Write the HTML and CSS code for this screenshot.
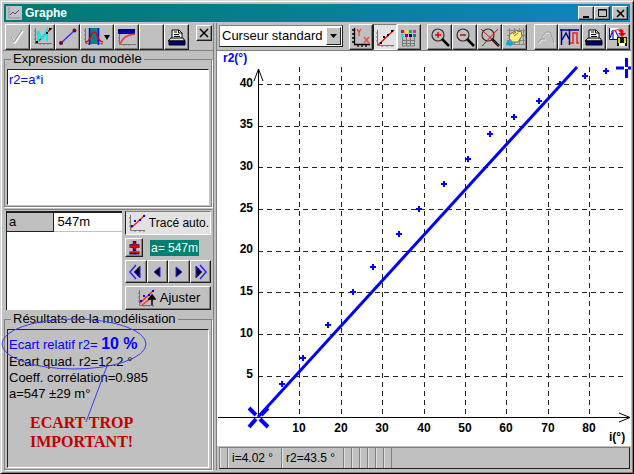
FILE: index.html
```html
<!DOCTYPE html>
<html lang="fr">
<head>
<meta charset="utf-8">
<title>Graphe</title>
<link rel="stylesheet" href="styles.css">
</head>
<body>
<div class="window">
  <header class="titlebar">
    <svg class="app-icon" width="16" height="14" viewBox="0 0 16 14"><rect width="16" height="14" fill="#c0c0c8"/><path d="M3 1v11h12" fill="none" stroke="#909098"/><path d="M4 9l3-3 2 2 4-4" fill="none" stroke="#5a4a78"/></svg>
    <h1>Graphe</h1>
    <div class="window-buttons">
      <button aria-label="Réduire"><svg width="13" height="11" viewBox="0 0 13 11"><path d="M3 9h6" stroke="#000" stroke-width="2"/></svg></button>
      <button aria-label="Agrandir"><svg width="13" height="11" viewBox="0 0 13 11"><path d="M2.500 1.500h8v7h-8zM2 2h9" fill="none" stroke="#000"/></svg></button>
      <button class="close" aria-label="Fermer"><svg width="13" height="11" viewBox="0 0 13 11"><path d="M3 2l7 7M10 2l-7 7" stroke="#000" stroke-width="1.600"/></svg></button>
    </div>
  </header>

  <main class="panes">
    <section class="model">
      <div class="toolbar">
        <button class="tool" aria-label="Valider"><svg width="22" height="22" viewBox="0 0 22 22"><path d="M5 12l3 5 8-12" fill="none" stroke="#fff" stroke-width="1.500"/><path d="M4 11l3 5 8-12" fill="none" stroke="#909090"/></svg></button>
        <button class="tool" aria-label="Modèle"><svg width="22" height="22" viewBox="0 0 22 22"><path d="M3.500 2v15.500H20M2 5h2M2 9h2M2 13h2M8 17v2M12 17v2M16 17v2" fill="none" stroke="#777"/><path d="M3 17l6-4 4-5 7-6" fill="none" stroke="#e00" stroke-width="1.500"/><path d="M6 15V5l4 8 5-9v11" fill="none" stroke="#0ee" stroke-width="2"/><path d="M4 15h2v2H4zM17 2h2v2h-2zM14 6h2v2h-2z"/></svg></button>
        <button class="tool" aria-label="Segment"><svg width="22" height="22" viewBox="0 0 22 22"><path d="M4 17L18 4" stroke="#33f" stroke-width="1.500"/><circle cx="4" cy="17" r="2" fill="#800020"/><circle cx="17.500" cy="4.500" r="2" fill="#800020"/></svg></button>
        <button class="tool drop" aria-label="Bornes"><svg width="32" height="22" viewBox="0 0 32 22"><path d="M4.500 2v15.500H22M3 5h2M3 9h2M3 13h2M8 17v2M21 17v2" fill="none" stroke="#777"/><path d="M9 2h8v16H9z" fill="#088080"/><path d="M8.500 2v17M17.500 2v17" stroke="#00f" stroke-width="1.500"/><path d="M4 16c7 0 5-10 9-10s3 10 9 10" fill="none" stroke="#e00" stroke-width="1.500"/><path d="M23 9h6l-3 5z"/></svg></button>
        <button class="tool" aria-label="Courbe"><svg width="22" height="22" viewBox="0 0 22 22"><path d="M2 3h17v5H2z" fill="#000090"/><path d="M4 6h2M8 6h2M12 6h2M16 6h2" stroke="#00f"/><path d="M3.500 8v10.500H20M2 12h2M2 15h2M8 18v2M13 18v2" fill="none" stroke="#777"/><path d="M4 18c3-7 7-9 15-10" fill="none" stroke="#e33" stroke-width="1.500"/></svg></button>
        <button class="tool" aria-label="Option"></button>
        <button class="tool" aria-label="Imprimer"><svg width="22" height="22" viewBox="0 0 22 22"><use href="#printer"/></svg></button>
        <button class="panel-close" aria-label="Fermer le volet"><svg width="13" height="13" viewBox="0 0 13 13"><path d="M2 2l8 8M10 2l-8 8" stroke="#000" stroke-width="1.500"/></svg></button>
      </div>

      <fieldset class="group">
        <legend><label for="expression">Expression du modèle</label></legend>
        <textarea id="expression" class="expression" spellcheck="false">r2=a*i</textarea>
      </fieldset>

      <div class="parameters">
        <div class="param-list">
          <table><tbody><tr><th scope="row">a</th><td>547m</td></tr></tbody></table>
        </div>
        <div class="adjust">
          <button class="auto" aria-pressed="true"><svg width="20" height="20" viewBox="0 0 20 20"><use href="#fit"/></svg>Tracé auto.</button>
          <div class="value-row">
            <button class="sign" aria-label="Changer le signe"><svg width="15" height="15" viewBox="0 0 15 15"><path d="M2.500 6h10M7.500 1v10" stroke="#000080" stroke-width="3.500"/><path d="M3 6h9M7.500 2v8" stroke="#e00000" stroke-width="2"/><path d="M2.500 13h10" stroke="#000080" stroke-width="3"/><path d="M3 12.500h9" stroke="#e00000"/></svg></button>
            <input class="value" aria-label="Valeur de a" value="a= 547m">
          </div>
          <div class="steps">
            <button aria-label="Beaucoup moins"><svg width="18" height="18" viewBox="0 0 18 18"><path d="M9 2L3 9l6 7" fill="none" stroke="#22f" stroke-width="1.500"/><path d="M13 3v12L7 9z" stroke="#22f"/></svg></button>
            <button aria-label="Moins"><svg width="18" height="18" viewBox="0 0 18 18"><path d="M12 4v10L6 9z" stroke="#22f"/></svg></button>
            <button aria-label="Plus"><svg width="18" height="18" viewBox="0 0 18 18"><path d="M6 4v10l6-5z" stroke="#22f"/></svg></button>
            <button aria-label="Beaucoup plus"><svg width="18" height="18" viewBox="0 0 18 18"><path d="M9 2l6 7-6 7" fill="none" stroke="#22f" stroke-width="1.500"/><path d="M5 3v12l6-6z" stroke="#22f"/></svg></button>
          </div>
          <button class="fit"><svg width="20" height="20" viewBox="0 0 20 20"><use href="#fit"/><path d="M6 17l12-9" stroke="#f33" stroke-width="1.500"/><path d="M16 17V8M13 11l3-4 3 4z" stroke="#000" stroke-width="1.500"/></svg>Ajuster</button>
        </div>
      </div>

      <fieldset class="group results-group">
        <legend>Résultats de la modélisation</legend>
        <div class="results">
          <p class="relative-error">Ecart relatif r2= <strong>10 %</strong></p>
          <p>Ecart quad. r2=12.2 °</p>
          <p>Coeff. corrélation=0.985</p>
          <p>a=547 ±29 m°</p>
        </div>
        <svg class="callout" width="148" height="106" viewBox="0 0 148 106"><ellipse cx="73" cy="26" rx="72" ry="25"/><path d="M106 48L85 104"/></svg>
        <p class="remark">ECART TROP IMPORTANT!</p>
      </fieldset>
    </section>

    <section class="graph">
      <div class="toolbar">
        <div class="combo">
          <select aria-label="Curseur"><option>Curseur standard</option></select>
          <span class="combo-arrow"><svg width="13" height="15" viewBox="0 0 13 15"><path d="M3 5h7l-3.500 4z"/></svg></span>
        </div>
        <div class="tools">
          <button class="tool" aria-label="Coordonnées"><svg width="22" height="22" viewBox="0 0 22 22"><path d="M4.500 2v16.500H20M2 4h2M2 8h2M2 12h2M2 16h2M8 18v3M12 18v3M16 18v3" fill="none" stroke="#000" stroke-width="1.300"/><path d="M7 3l2 3 2-3M9 6v4M14 11l5 6M19 11l-5 6" fill="none" stroke="#f04848" stroke-width="1.400"/></svg></button>
          <button class="tool pressed" aria-label="Modélisation" aria-pressed="true"><svg width="22" height="22" viewBox="0 0 22 22"><path d="M3.500 4v15.500H20M2 7h2M2 11h2M2 15h2M8 19v2M13 19v2M18 19v2" fill="none" stroke="#777"/><path d="M4 19L20 4" stroke="#f00" stroke-width="1.300"/><path d="M6 16h2v2H6zM9 10h2v2H9zM13 8h2v2h-2zM17 4h2v2h-2z"/></svg></button>
          <button class="tool" aria-label="Tableau"><svg width="22" height="22" viewBox="0 0 22 22"><path d="M4.500 11v9h12v-9M4 14.500h13M4 17.500h13M8.500 11v9M12.500 11v9" fill="none" stroke="#777"/><path d="M3 4h3v3H3z" fill="red"/><path d="M7 4h3v3H7z" fill="#ee0"/><path d="M11 4h3v3h-3z" fill="#0c0"/><path d="M15 4h3v3h-3z" fill="#f0f"/><path d="M3 8h3v3H3z" fill="#0ee"/><path d="M7 8h3v3H7z" fill="#808"/><path d="M11 8h3v3h-3z" fill="#008"/><path d="M15 8h3v3h-3z" fill="#088"/></svg></button>
        </div>
        <div class="tools zooms">
          <button class="tool" aria-label="Zoom avant"><svg width="22" height="22" viewBox="0 0 22 22"><use href="#lens"/><path d="M6 9h6M9 6v6" stroke="#d00" stroke-width="1.500"/></svg></button>
          <button class="tool" aria-label="Zoom arrière"><svg width="22" height="22" viewBox="0 0 22 22"><use href="#lens"/><path d="M6 9h6" stroke="#d00" stroke-width="1.500"/></svg></button>
          <button class="tool" aria-label="Annuler le zoom"><svg width="22" height="22" viewBox="0 0 22 22"><use href="#lens"/><path d="M2 3l18 17M19 3L3 20" stroke="#e00"/></svg></button>
          <button class="tool" aria-label="Déplacer"><svg width="22" height="22" viewBox="0 0 22 22"><path d="M5.500 2v17M10.500 2v17M15.500 2v17M19.500 2v17M3 4.500h18M3 9.500h18M3 14.500h18M3 18.500h18" stroke="#888"/><path d="M5 12l1-4 7-4 1 2 3-1 1 5-4 6H8z" fill="#fff27a" stroke="#765"/><path d="M9 8l3-2M10 10l4-3" stroke="#765"/><path d="M3 14l7 3-3 3-5-1z" fill="#0ad"/></svg></button>
        </div>
        <div class="tools">
          <button class="tool" aria-label="Lissage"><svg width="22" height="22" viewBox="0 0 22 22"><path d="M4 18l3-4h4M8 11l3-4h4l5 11" fill="none" stroke="#eee"/><path d="M3 17l3-4h4M7 11l4-5h4l4 11" fill="none" stroke="#999"/></svg></button>
          <button class="tool" aria-label="Signal"><svg width="22" height="22" viewBox="0 0 22 22"><path d="M1 4h19M2.500 3v16M10.500 3v16" stroke="#008" stroke-width="1.500"/><path d="M3 14l4-7 3 6" fill="none" stroke="#008" stroke-width="1.500"/><path d="M11 17h3V7h4v10h2" fill="none" stroke="#e22" stroke-width="1.500"/></svg></button>
          <button class="tool" aria-label="Imprimer"><svg width="22" height="22" viewBox="0 0 22 22"><use href="#printer"/></svg></button>
          <button class="tool" aria-label="Copier vers"><svg width="22" height="22" viewBox="0 0 22 22"><path d="M2 2h10v12H2z" fill="#fff"/><path d="M2.500 2v11.500H12" fill="none" stroke="#008"/><path d="M3 12l3-8v9M8 4l4 8" fill="none" stroke="#22c" stroke-width="1.300"/><path d="M4 6l8-3" stroke="#e22"/><path d="M11 4c5-2 6 1 5 3h3l-4 4-4-4h3" fill="#e00"/><path d="M10 11h10v9H10z" fill="#111"/><path d="M11 12h2v5h-2zM17 12h2v5h-2z" fill="#dd0"/><path d="M12 17h6v3h-6z" fill="#ffd"/></svg></button>
        </div>
      </div>

      <svg class="plot" viewBox="217 51 414 395" role="img" aria-label="r2 en fonction de i">
        <g class="grid">
          <path d="M299.500 67V417M341.500 67V417M382.500 67V417M424.500 67V417M465.500 67V417M506.500 67V417M548.500 67V417M589.500 67V417"/>
          <path d="M258 376.500H624M258 334.500H624M258 292.500H624M258 251.500H624M258 209.500H624M258 167.500H624M258 126.500H624M258 84.500H624"/>
        </g>
        <g class="axes">
          <path d="M218 417.500H630M619 413l11 4.500-11 4.500M258.500 417V69M254 81l4.500-12 4.500 12"/>
        </g>
        <path class="fit-line" d="M258 417L577 67"/>
        <path class="points" d="M279 384h6M282 381v6M300 358h6M303 355v6M325 325h6M328 322v6M350 292h6M353 289v6M370 267h6M373 264v6M396 234h6M399 231v6M416 209h6M419 206v6M441 184h6M444 181v6M465 159h6M468 156v6M487 134h6M490 131v6M511 117h6M514 114v6M536 101h6M539 98v6M557 84h6M560 81v6M582 76h6M585 73v6M603 71h6M606 68v6"/>
        <path class="origin" d="M249 408l7 7M260 419l8 8M268 408l-7 7M256 419l-7 8"/>
        <path class="cursor" d="M616 68h8M628 68h3M626.500 58v9M626.500 69v9"/>
        <g class="labels">
          <g text-anchor="end"><text x="253" y="87">40</text><text x="253" y="128">35</text><text x="253" y="170">30</text><text x="253" y="212">25</text><text x="253" y="253">20</text><text x="253" y="295">15</text><text x="253" y="337">10</text><text x="253" y="378">5</text></g>
          <g text-anchor="middle"><text x="299" y="432">10</text><text x="341" y="432">20</text><text x="382" y="432">30</text><text x="424" y="432">40</text><text x="465" y="432">50</text><text x="506" y="432">60</text><text x="548" y="432">70</text><text x="589" y="432">80</text></g>
          <text x="609" y="441">i(°)</text><text class="y-name" x="223" y="62">r2(°)</text>
        </g>
      </svg>

      <footer class="status">
        <span class="cell slim"></span><span class="cell x-value">i=4.02 °</span><span class="cell y-value">r2=43.5 °</span><span class="cell slim"></span><span class="cell slim"></span><span class="cell slim"></span><span class="cell slim"></span><span class="cell slim"></span><span class="cell slim"></span>
      </footer>
    </section>
  </main>
</div>

<svg class="symbols" width="0" height="0" aria-hidden="true">
  <symbol id="printer" viewBox="0 0 22 22"><path d="M6 13V4h7l3 3v6z" fill="#fff" stroke="#000"/><path d="M8 6h3M8 8.500h5M8 10.500h6M12.500 4v3H16" fill="none" stroke="#000"/><path d="M5 12l-3 3h17l-2-3z" fill="#ddd" stroke="#000"/><path d="M3 15h16v4H3z" fill="#000080" stroke="#000"/></symbol>
  <symbol id="lens" viewBox="0 0 22 22"><circle cx="9" cy="9" r="6" fill="none" stroke="#333" stroke-width="1.200"/><path d="M13 13l7 7" stroke="#000" stroke-width="2.500"/></symbol>
  <symbol id="fit" viewBox="0 0 20 20"><path d="M3.500 2v15.500H18M2 5h2M2 9h2M2 13h2M8 17v2M13 17v2M17 17v2" fill="none" stroke="#777"/><path d="M4 15L18 2" stroke="#f22" stroke-width="1.500"/><path d="M4 12h2v2H4zM7 7h2v2H7zM12 6h2v2h-2zM16 2h2v2h-2z" fill="#00f"/></symbol>
</svg>
</body>
</html>
```
FILE: styles.css
```css
:root {
  --face: #c0c0c0;
  --light: #ffffff;
  --shade: #808080;
  --dark: #202020;
  --blue: #0000ff;
}

* { box-sizing: border-box; }

body {
  margin: 0;
  height: 100vh;
  font: 13px/16px "Liberation Sans", Arial, sans-serif;
  color: #000;
  background: var(--face);
}

h1, p { margin: 0; font: inherit; }

button {
  display: flex;
  align-items: center;
  justify-content: center;
  flex: none;
  margin: 0;
  padding: 0;
  font: inherit;
  background: var(--face);
  border: 1px solid;
  border-color: var(--light) var(--dark) var(--dark) var(--light);
  box-shadow: inset -1px -1px var(--shade);
}

svg { flex: none; display: block; }

.symbols { position: absolute; }

/* Window frame */
.window {
  display: flex;
  flex-direction: column;
  min-height: 100vh;
  padding: 1px 2px 3px;
  border: 1px solid;
  border-color: #d8d8d8 #000 #000 #d8d8d8;
  box-shadow: inset 1px 1px var(--light), inset -1px -1px var(--shade);
}

.titlebar {
  display: flex;
  align-items: center;
  gap: 3px;
  height: 18px;
  margin: 2px 1px 1px;
  padding: 0 2px;
  background: linear-gradient(90deg, #007a70, #087f95 50%, #1085c4);
}

.titlebar h1 {
  flex: 1;
  color: #fff;
  font-size: 12px;
  font-weight: bold;
}

.window-buttons { display: flex; }
.window-buttons button { width: 16px; height: 14px; }
.window-buttons .close { margin-left: 2px; }

.panes { display: flex; flex: 1; gap: 2px; }

.model {
  display: flex;
  flex-direction: column;
  width: 211px;
  border-right: 1px solid var(--shade);
}

.toolbar {
  display: flex;
  align-items: flex-start;
  height: 28px;
  padding-top: 1px;
  border-bottom: 1px solid var(--shade);
}

.model .toolbar { padding-left: 2px; }

.tool { width: 25px; height: 26px; }
.tool.drop { width: 34px; }

.tool.pressed,
.auto {
  border-color: var(--shade) var(--light) var(--light) var(--dark);
  box-shadow: none;
  background: #e2e2e2;
}

.panel-close { width: 16px; height: 16px; margin: 1px 1px 0 auto; }

/* Model pane */
.group {
  position: relative;
  min-width: 0;
  margin: 0 1px;
  padding: 2px 2px 1px;
  border: 1px solid var(--shade);
  box-shadow: 1px 1px var(--light);
}

.group legend {
  margin-left: 4px;
  padding: 0 2px;
  line-height: 16px;
}

.expression {
  display: block;
  width: 100%;
  height: 136px;
  padding: 2px 1px;
  resize: none;
  font: inherit;
  color: var(--blue);
  background: #fff;
  border: 1px solid;
  border-color: var(--dark) var(--light) var(--light) var(--dark);
  outline: none;
}

.parameters {
  display: flex;
  gap: 3px;
  margin: 2px 1px 0;
  padding: 1px 1px 1px 2px;
  border-top: 1px solid var(--shade);
}

.param-list {
  flex: 1;
  background: #fff;
  border-top: 2px solid var(--dark);
  border-left: 1px solid var(--dark);
}

.param-list table { width: 100%; border-collapse: collapse; }

.param-list th,
.param-list td {
  height: 18px;
  padding: 0 4px;
  text-align: left;
  font-weight: normal;
  border-bottom: 1px solid var(--face);
}

.param-list th {
  width: 46px;
  padding: 0 2px;
  background: var(--face);
  border-right: 1px solid var(--dark);
  border-bottom-color: var(--dark);
}

.adjust {
  display: flex;
  flex-direction: column;
  justify-content: space-between;
  width: 86px;
  height: 99px;
}

.auto, .fit { gap: 4px; height: 24px; }
.auto { gap: 2px; font-size: 12px; }

.value-row { display: flex; align-items: center; gap: 7px; }
.sign { width: 18px; height: 19px; }

.value {
  width: 49px;
  height: 16px;
  padding: 0 1px;
  border: 0;
  font: inherit;
  font-size: 12px;
  color: #fff;
  background: #008070;
}

.steps { display: grid; grid-template-columns: repeat(4, 1fr); }
.steps button { height: 23px; }

.results-group { flex: 1; }

.results {
  height: 139px;
  padding: 5px 1px;
  border: 1px solid;
  border-color: var(--dark) var(--light) var(--light) var(--dark);
}

.relative-error { color: var(--blue); line-height: 18px; }
.relative-error strong { font-size: 16px; }

.callout {
  position: absolute;
  top: -9px;
  left: -4px;
  fill: none;
  stroke: #3c3cf0;
}

.remark {
  position: absolute;
  top: 86px;
  left: 25px;
  width: 120px;
  font: bold 16px/19px "Liberation Serif", "Times New Roman", serif;
  color: #c00000;
}

/* Graph pane */
.graph {
  display: flex;
  flex: 1;
  flex-direction: column;
  min-width: 0;
  border-left: 1px solid var(--shade);
}

.graph .toolbar { gap: 6px; padding-right: 1px; padding-left: 2px; }

.combo {
  position: relative;
  flex: none;
  width: 124px;
  height: 22px;
  margin-top: 1px;
  background: #fff;
  border: 1px solid;
  border-color: var(--shade) var(--dark) var(--dark) var(--shade);
}

.combo select {
  width: 100%;
  height: 100%;
  padding: 0 2px;
  appearance: none;
  border: 0;
  font: inherit;
  background: transparent;
}

.combo-arrow {
  position: absolute;
  top: 1px;
  right: 1px;
  bottom: 1px;
  display: flex;
  align-items: center;
  background: var(--face);
  border: 1px solid;
  border-color: var(--light) var(--dark) var(--dark) var(--light);
  pointer-events: none;
}

.tools { display: flex; }
.graph .tool { width: 24px; }
.graph .zooms .tool { width: 25px; }
.tools:last-child { margin-left: auto; }

.plot {
  flex: 1;
  width: 100%;
  min-height: 0;
  background: #fff;
}

.grid { fill: none; stroke: #222; stroke-dasharray: 5 4; shape-rendering: crispEdges; }
.axes { fill: none; stroke: #000; }
.fit-line { fill: none; stroke: var(--blue); stroke-width: 3; }
.points { stroke: var(--blue); stroke-width: 2; }
.origin { stroke: var(--blue); stroke-width: 4; }
.cursor { stroke: var(--blue); stroke-width: 3; }
.labels { font-size: 12px; font-weight: bold; }
.y-name { fill: var(--blue); }

.status {
  display: flex;
  height: 22px;
  margin: 1px 1px 1px 2px;
  font-size: 12px;
  border: 1px solid;
  border-color: var(--shade) var(--dark) var(--dark) var(--shade);
}

.cell {
  padding: 2px 4px;
  border-right: 1px solid var(--shade);
  box-shadow: inset 1px 0 #e0e0e0;
}

.slim { width: 8px; padding: 0; }
.x-value { width: 54px; }
.y-value { width: 62px; }
```
